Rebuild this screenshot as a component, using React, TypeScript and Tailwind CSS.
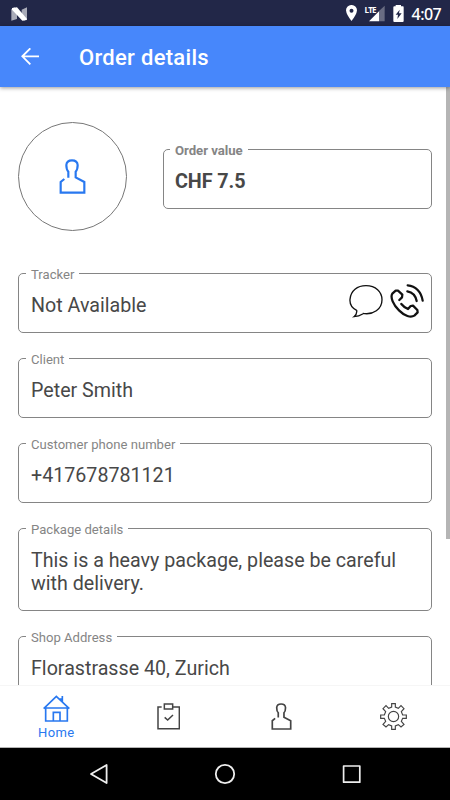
import type { ReactNode } from "react";

function PersonIcon({ className }: { className: string }) {
  return (
    <svg className={className} viewBox="0 0 81 105" preserveAspectRatio="none" fill="none" stroke="currentColor" strokeWidth="6.5">
      <path d="M16 60 L5 69 V101 H76 V69 L50 55 V38 Q56 32 56 18 Q55 4 39 4 Q23 4 22 18 Q22 32 28 38 V56" />
    </svg>
  );
}

type FieldProps = {
  label: string;
  value: string;
  strong?: boolean;
  className?: string;
  children?: ReactNode;
};

function Field({ label, value, strong = false, className = "", children }: FieldProps) {
  return (
    <fieldset className={`min-w-0 shrink-0 rounded-[5px] border border-[#858585] pr-[7px] ${strong ? "pl-[6px]" : "pl-[7px]"} ${className}`}>
      <legend
        className={`h-4 px-[5px] leading-[19px] whitespace-nowrap text-[#858585] ${strong ? "text-[13.2px] font-bold tracking-[-0.04px]" : "text-[13.1px]"}`}
      >
        {label}
      </legend>
      <div className="flex items-start justify-between pl-[5px]">
        <p
          className={`pt-[13px] leading-[23px] text-[#484848] ${strong ? "text-[19.8px] font-bold tracking-[-0.1px]" : "text-[19.66px]"}`}
        >
          {value}
        </p>
        {children}
      </div>
    </fieldset>
  );
}

function StatusBar() {
  return (
    <div className="flex h-[26px] shrink-0 items-center bg-[#222748] pr-[9px] pl-[11px] text-white">
      <svg className="mt-px h-[14px] w-[17px]" viewBox="0 0 51 42">
        <path fill="#a9abb8" d="M1 7 L10 1 L18 8 V36 L1 41 Z M32 8 L48 1 V36 L39 41 L32 34 Z" />
        <path fill="#fff" d="M3 3 L18 1 L48 36 L47 39 L34 41 L3 8 Z" />
      </svg>
      <div className="ml-auto flex items-center">
        <svg className="h-[16px] w-[11px]" viewBox="0 0 33 48">
          <path fill="#fff" fillRule="evenodd" d="M16.5 0 A16 16 0 0 1 33 16 Q32 29 16.5 48 Q1 29 0 16 A16 16 0 0 1 16.5 0 Z M16.5 11 A6 6 0 1 0 16.5 23 A6 6 0 1 0 16.5 11 Z" />
        </svg>
        <div className="relative ml-[8px] h-[17px] w-[20px]">
          <svg className="absolute inset-0 h-[17px] w-[20px]" viewBox="0 0 60 51">
            <path fill="#696c82" d="M42 18 L59 2 V49 H42 Z" />
            <path fill="#fff" d="M12 49 L42 19 V49 Z" />
          </svg>
          <span className="absolute top-0 left-0 font-['Open_Sans',sans-serif] text-[8px] leading-[9px] font-bold tracking-[-0.9px]">LTE</span>
        </div>
        <svg className="ml-[8px] h-[17px] w-[11px]" viewBox="0 0 33 51">
          <path fill="#fff" d="M8 4 V0 H24 V4 H30 Q32 4 32 7 V48 Q32 51 29 51 H4 Q1 51 1 48 V7 Q1 4 4 4 Z" />
          <path fill="#222748" d="M20 14 L8 29 H15 L13 42 L26 25 H18 Z" />
        </svg>
        <span className="ml-[8px] pt-[2px] font-['Noto_Sans',sans-serif] text-[16px] leading-[20px] font-medium tracking-[-0.6px]">4:07</span>
      </div>
    </div>
  );
}

function TabBar() {
  return (
    <nav className="grid h-[62px] shrink-0 grid-cols-4 border-b border-[#b4b4b4] bg-white text-[#444]">
      <div className="flex flex-col items-center pt-[9px] text-[#2878f0]">
        <svg className="h-[27px] w-[27px]" viewBox="0 0 81 81" fill="none" stroke="currentColor" strokeWidth="5">
          <path d="M2 41 L40 4 L79 41 M2 39 H79 M8 39 V78 H73 V39 M31 78 V52 H51 V78 M53 15 V10 M58 20 V3" />
        </svg>
        <span className="mt-[2px] text-[13px] leading-[17px] tracking-[0.4px]">Home</span>
      </div>
      <div className="flex items-center justify-center">
        <svg className="h-[27px] w-[23px]" viewBox="0 0 69 81" fill="none" stroke="currentColor" strokeWidth="4.5">
          <path d="M14 12 H3 V77 H67 V12 H47 M22 3 H47 V18 H22 Z M23 43 L32 51 L48 36" />
        </svg>
      </div>
      <div className="flex items-center justify-center">
        <PersonIcon className="h-[27px] w-[21px]" />
      </div>
      <div className="flex items-center justify-center">
        <svg className="h-[27px] w-[27px]" viewBox="0 0 81 81" fill="none" stroke="currentColor" strokeWidth="3.5">
          <circle cx="40.5" cy="40.5" r="15.5" />
          <path d="M35 2 H46 V12 L55 16 L63 8 L72 17 L64 26 L68 36 H79 V46 H68 L64 55 L72 64 L63 72 L55 65 L46 69 V79 H35 V69 L26 65 L18 72 L9 64 L17 55 L13 46 H2 V36 H13 L17 26 L9 17 L18 8 L26 16 L35 12 Z" />
        </svg>
      </div>
    </nav>
  );
}

function SystemNav() {
  return (
    <div className="flex h-[52px] shrink-0 items-center bg-black pl-[88px] text-[#eee]">
      <svg className="h-[22px] w-[22px]" viewBox="0 0 22 22" fill="none" stroke="currentColor" strokeWidth="1.8" strokeLinejoin="round">
        <path d="M3 11 L18.6 2 V20 Z" />
      </svg>
      <svg className="ml-[104px] h-[22px] w-[22px]" viewBox="0 0 22 22" fill="none" stroke="currentColor" strokeWidth="1.8">
        <circle cx="11" cy="11" r="9.2" />
      </svg>
      <svg className="ml-[105px] h-[22px] w-[22px]" viewBox="0 0 22 22" fill="none" stroke="currentColor" strokeWidth="1.7" strokeLinejoin="round">
        <path d="M2.6 3 H18.8 V19.2 H2.6 Z" />
      </svg>
    </div>
  );
}

export default function App() {
  return (
    <div className="flex h-[800px] w-[450px] flex-col overflow-hidden bg-white font-[Roboto,sans-serif]">
      <StatusBar />
      <header className="z-10 flex h-[61px] shrink-0 items-center bg-[#4787fb] pl-[21px] text-white shadow-[0_1px_4px_rgba(0,0,0,0.4)]">
        <svg className="h-[18px] w-[18px]" viewBox="0 0 54 54" fill="none" stroke="currentColor" strokeWidth="5.5">
          <path d="M54 25 H4 M28 1 L4 25 L28 49" />
        </svg>
        <h1 className="ml-[40px] pt-[2px] text-[22px] leading-[26px] font-medium tracking-[0.3px]">Order details</h1>
      </header>
      <main className="flex min-h-0 grow overflow-hidden border-b border-[#f6f6f6]">
        <div className="flex w-[446px] flex-col gap-[17px] pr-[14px] pl-[18px]">
          <div className="flex h-[161px] shrink-0 items-start justify-between pt-[35px]">
            <div className="flex h-[109px] w-[109px] items-center justify-center rounded-full border border-[#777] text-[#2878f0]">
              <PersonIcon className="h-[35px] w-[27px]" />
            </div>
            <Field label="Order value" value="CHF 7.5" strong className="mt-[19px] h-[68px] w-[269px]" />
          </div>
          <Field label="Tracker" value="Not Available" className="h-[68px]">
            <div className="mt-[3px] flex items-center gap-[7px]">
              <svg className="h-[34px] w-[34px]" viewBox="0 0 102 102" fill="none" stroke="#111" strokeWidth="4">
                <path d="M41 90 Q30 97 15 98 Q25 90 23 79 C5 70 2 58 3 46 C5 20 25 5 51 5 C80 5 99 23 99 47 C99 75 73 94 41 88" />
              </svg>
              <svg className="h-[34px] w-[34px]" viewBox="0 0 102 102" fill="none" stroke="#111" strokeWidth="6.8" strokeLinecap="round" strokeLinejoin="round">
                <path d="M28 48 L36 40 L37 32 L24 20 H17 L7 29 C0 40 10 63 27 79 C44 96 62 102 73 95 L83 85 L82 78 L69 65 L62 66 L54 75 Q41 69 34 60" />
                <path d="M53 4 C77 6 94 24 98 50 M52 22 C68 25 77 35 80 51" />
              </svg>
            </div>
          </Field>
          <Field label="Client" value="Peter Smith" className="h-[68px]" />
          <Field label="Customer phone number" value="+417678781121" className="h-[68px]" />
          <Field label="Package details" value="This is a heavy package, please be careful with delivery." className="h-[91px]" />
          <Field label="Shop Address" value="Florastrasse 40, Zurich" className="h-[68px]" />
        </div>
        <div className="h-[452px] w-[4px] shrink-0 bg-[#b5b5b5]" />
      </main>
      <TabBar />
      <SystemNav />
    </div>
  );
}
